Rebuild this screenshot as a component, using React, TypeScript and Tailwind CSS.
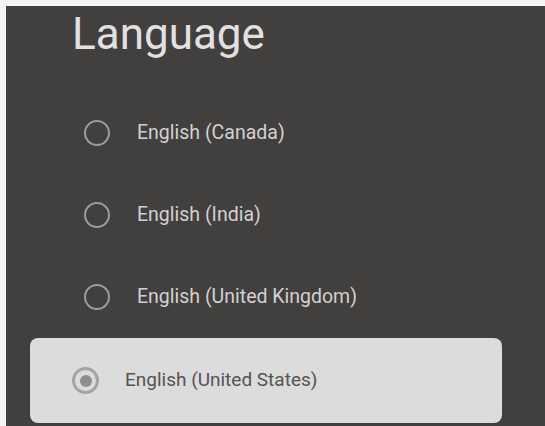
const OPTIONS = ["English (Canada)", "English (India)", "English (United Kingdom)"];

function Radio({ checked }: { checked?: boolean }) {
  if (checked) {
    return (
      <span className="flex h-[27px] w-[27px] shrink-0 items-center justify-center rounded-full border-[3px] border-[#a3a3a3]">
        <span className="h-[12px] w-[12px] rounded-full bg-[#8e8e8e]" />
      </span>
    );
  }
  return <span className="h-[26px] w-[26px] shrink-0 rounded-full border-[2.5px] border-[#9d9b9b]" />;
}

export default function App() {
  return (
    <div
      className="h-[426px] w-[545px] bg-[#f4f4f4] pl-[6px] pt-[6px]"
      style={{ fontFamily: "Roboto, 'Liberation Sans', sans-serif" }}
    >
      <div className="flex h-full flex-col bg-[#423f3f]">
        {/* Title */}
        <div className="h-[86px] shrink-0 pl-[66px] pt-[6px]">
          <h1 className="text-[44px] leading-none text-[#e2e0e0]">Language</h1>
        </div>

        {/* Options */}
        {OPTIONS.map((label) => (
          <div key={label} className="flex h-[82px] shrink-0 items-center pl-[78px]">
            <Radio />
            <span className="ml-[27px] text-[19.5px] text-[#d2d0d0]">{label}</span>
          </div>
        ))}

        {/* Selected / focused option */}
        <div className="ml-[24px] flex h-[85px] w-[472px] shrink-0 items-center rounded-lg bg-[#dcdcdc] pl-[42px]">
          <Radio checked />
          <span className="ml-[26px] text-[19px] text-[#555353]">English (United States)</span>
        </div>
      </div>
    </div>
  );
}
